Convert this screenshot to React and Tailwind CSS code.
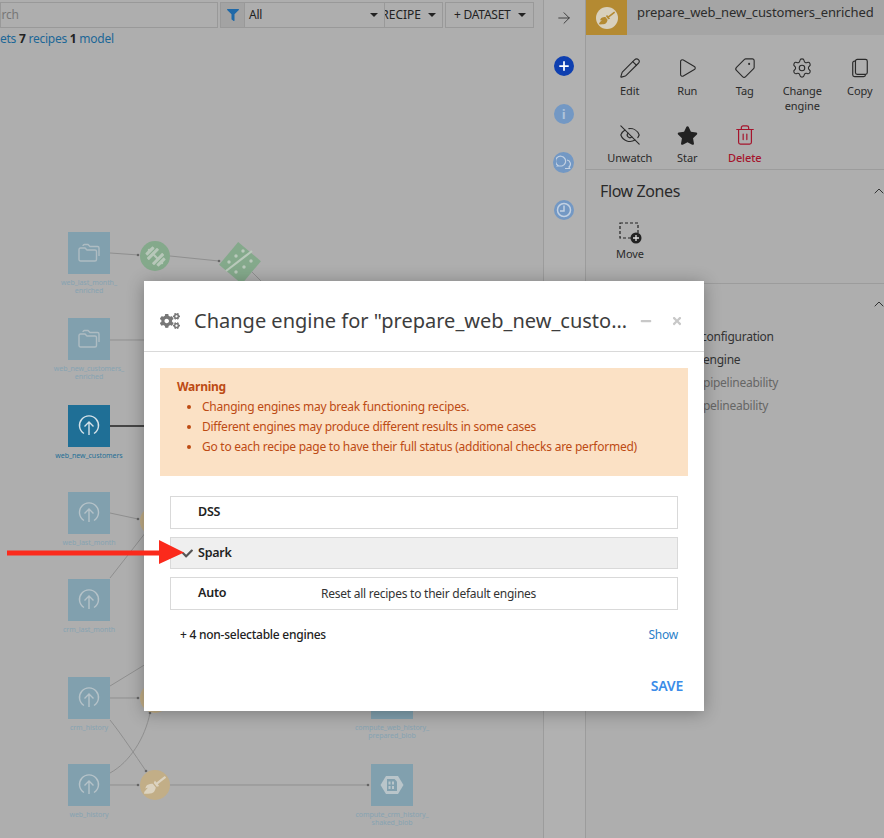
import { ArrowRight, ChevronUp, EyeOff, Pencil, Play, Plus, Settings, Tag, Trash2 } from 'lucide-react';
import { FaBroom, FaCheck, FaCogs, FaDumbbell, FaFilter, FaMinus, FaStar, FaTimes } from 'react-icons/fa';

function DatasetNode({ x, y, label, kind = 'upload', active = false }) {
  return (
    <div className="absolute w-[100px] flex flex-col items-center" style={{ left: x, top: y }}>
      <div className={`w-[42px] h-[42px] flex items-center justify-center ${active ? 'bg-[#1f6f96]' : 'bg-[#81a0ae]'}`}>
        {kind === 'folder' && <Folders />}
        {kind === 'upload' && <UploadRing color={active ? '#d5e2e9' : '#b5c2c8'} />}
        {kind === 'blob' && <BlobIcon />}
      </div>
      <div className={`mt-[5px] text-[7px] leading-[8px] tracking-[-0.05px] text-center whitespace-pre ${active ? 'text-[#1f6f96]' : 'text-[#86a3b2]'}`}>{label}</div>
    </div>
  );
}

function Folders() {
  return (
    <svg width="22" height="20" viewBox="0 0 22 20" fill="none" stroke="#aebcc2" strokeWidth="1.4">
      <path d="M1 6.500A1.500 1.500 0 0 1 2.500 5H7l2 2h8a1.500 1.500 0 0 1 1.500 1.500v8A1.500 1.500 0 0 1 17 18H2.500A1.500 1.500 0 0 1 1 16.500z" />
      <path d="M5 3A1.500 1.500 0 0 1 6.500 1.500H10l2 2h7.500A1.500 1.500 0 0 1 21 5v8" />
    </svg>
  );
}

function UploadRing({ color }) {
  return (
    <svg width="22" height="22" viewBox="0 0 22 22" fill="none" stroke={color} strokeWidth="1.4">
      <path d="M6 18.500a9.500 9.500 0 1 1 10 0" />
      <path d="M11 20V7M6.500 11.500 11 7l4.500 4.500" />
    </svg>
  );
}

function BlobIcon() {
  return (
    <svg width="24" height="20" viewBox="0 0 24 20">
      <path d="M6 1h12l5.500 9L18 19H6L.5 10z" fill="#b9c5ca" />
      <path d="M7 4h7.500L17 6.500V16H7z" fill="#81a0ae" />
      <path d="M8.500 6.500h2v3h-2zM12 6.500h2v3h-2zM8.500 11h2v3h-2zM12 11h2v3h-2z" fill="#b9c5ca" />
    </svg>
  );
}

function RecipeNode({ x, y, color, children }) {
  return (
    <div className="absolute w-[30px] h-[30px] rounded-full flex items-center justify-center" style={{ left: x, top: y, backgroundColor: color }}>
      {children}
    </div>
  );
}

function FlowCanvas() {
  const dots = [[138, 255], [219, 261], [138, 519], [138, 698], [146, 771], [150, 713], [138, 785], [368, 785]];
  return (
    <div className="absolute inset-0">
      <svg className="absolute inset-0" width="543" height="838" fill="none" stroke="#8f8f8f" strokeWidth="1">
        <path d="M110 253 139 255M170 256 219 261M252 272 266 286M110 340 160 340M110 513 138 519M110 578 146 532M110 686 146 664M110 698 138 698M110 720C122 735 135 755 146 771M110 773C130 762 145 738 150 713M110 785 138 785M170 785 368 785" />
        <path d="M110 426 160 426" stroke="#222" strokeWidth="1.4" />
        {dots.map(([cx, cy]) => (
          <circle key={`${cx}-${cy}`} cx={cx} cy={cy} r="1.300" fill="#666" stroke="none" />
        ))}
      </svg>
      <DatasetNode x={39} y={232} kind="folder" label={'web_last_month_\nenriched'} />
      <DatasetNode x={39} y={318} kind="folder" label={'web_new_customers_\nenriched'} />
      <DatasetNode x={39} y={405} active label="web_new_customers" />
      <DatasetNode x={39} y={492} label="web_last_month" />
      <DatasetNode x={39} y={579} label="crm_last_month" />
      <DatasetNode x={39} y={677} label="crm_history" />
      <DatasetNode x={39} y={764} label="web_history" />
      <DatasetNode x={342} y={677} kind="blob" label={'compute_web_history_\nprepared_blob'} />
      <DatasetNode x={342} y={764} kind="blob" label={'compute_crm_history_\nshaked_blob'} />
      <RecipeNode x={140} y={241} color="#84a98b">
        <FaDumbbell className="rotate-45 text-[#b7c7b9]" size={21} />
      </RecipeNode>
      <svg className="absolute left-[219px] top-[242px]" width="42" height="42" viewBox="0 0 42 42">
        <path d="M21 0 42 21 21 42 0 21z" transform="rotate(-5 21 21)" fill="#84a98b" />
        <path d="M7 29 33 9" stroke="#b9c9bb" strokeWidth="2.200" />
        <g fill="#b9c9bb">
          <circle cx="10" cy="20" r="1.700" /><circle cx="17" cy="14" r="1.700" /><circle cx="24" cy="9" r="1.700" />
          <circle cx="17" cy="30" r="1.700" /><circle cx="25" cy="25" r="1.700" /><circle cx="32" cy="19" r="1.700" />
        </g>
      </svg>
      <RecipeNode x={140} y={506} color="#c2ae87" />
      <RecipeNode x={140} y={683} color="#c2ae87" />
      <RecipeNode x={140} y={770} color="#c2ae87"><FaBroom className="text-[#dcd3c0]" size={22} /></RecipeNode>
    </div>
  );
}

function Caret() {
  return <span className="shrink-0 w-0 h-0 border-x-[4px] border-x-transparent border-t-[4px] border-t-[#222]" />;
}

function Toolbar() {
  return (
    <div className="relative flex h-[26px] mt-[2px] w-[534px] text-[12px] text-[#222]">
      <div className="w-[218px] border border-[#999] text-[#777] leading-[24px] overflow-hidden">
        <span className="block -ml-[6px]">arch</span>
      </div>
      <div className="ml-[2px] w-[25px] border border-[#999] bg-[#a3a3a3] flex items-center justify-center">
        <FaFilter className="text-[#1f69a8]" size={12} />
      </div>
      <div className="w-[140px] border-y border-r border-[#999] flex items-center justify-between pl-[4px] pr-[6px]">
        All<Caret />
      </div>
      <div className="w-[58px] border-y border-r border-[#999] flex items-center justify-end gap-[7px] pr-[6px] overflow-hidden tracking-normal">
        <span className="whitespace-nowrap">RECIPE</span><Caret />
      </div>
      <div className="ml-[2px] w-[89px] border border-[#999] flex items-center justify-between pl-[8px] pr-[7px] whitespace-nowrap">
        + DATASET<Caret />
      </div>
    </div>
  );
}

function Rail() {
  return (
    <div className="w-[42px] shrink-0 border-l border-[#9c9c9c] bg-[#b1b1b1] flex flex-col items-center pt-[9px] pr-[2px]">
      <ArrowRight className="w-[18px] h-[18px] text-[#333]" strokeWidth={1.2} />
      <div className="mt-[29px] w-5 h-5 rounded-full bg-[#0e3fb0] flex items-center justify-center">
        <Plus className="w-[14px] h-[14px] text-white" strokeWidth={3} />
      </div>
      <div className="mt-[28px] w-5 h-5 rounded-full bg-[#7398c4] flex items-center justify-center text-[#afc3da] text-[13px] font-bold leading-none">i</div>
      <div className="mt-[28px] w-[21px] h-[21px] rounded-full bg-[#7398c4] flex items-center justify-center">
        <svg width="15" height="15" viewBox="0 0 15 15" fill="none" stroke="#c3d1e2" strokeWidth="1.200"><path d="M2 10.500A5 5 0 1 1 6 11H1.500z" /><path d="M11 5a4 4 0 0 1 2 7l.7 1.500H9" /></svg>
      </div>
      <div className="mt-[27px] w-5 h-5 rounded-full bg-[#7398c4] flex items-center justify-center">
        <svg width="16" height="16" viewBox="0 0 16 16" fill="none" stroke="#c3d1e2" strokeWidth="1.500"><circle cx="8" cy="8" r="6.500" /><path d="M8 3.500V9H4" /></svg>
      </div>
    </div>
  );
}

function Action({ icon, label, color = 'text-[#2a2a2a]', tight = false }) {
  return (
    <div className={`flex flex-col items-center text-center text-[11px] leading-[15px] tracking-[-0.1px] ${color}`}>
      <div className="h-[24px] flex items-center justify-center">{icon}</div>
      <div className={tight ? 'mt-[1px]' : 'mt-[3px]'}>{label}</div>
    </div>
  );
}

function CopyIcon() {
  return (
    <svg width="20" height="20" viewBox="0 0 22 22" fill="none" stroke="#2a2a2a" strokeWidth="1.300">
      <rect x="6" y="1.500" width="13" height="16.500" rx="2" />
      <path d="M6 3.500H5A2 2 0 0 0 3 5.500v13A2 2 0 0 0 5 20.500h10A2 2 0 0 0 17 18.500V18" />
    </svg>
  );
}

function SidePanel() {
  const cls = 'w-[22px] h-[22px]';
  return (
    <div className="flex-1 min-w-0 border-l border-[#9c9c9c] flex flex-col overflow-hidden">
      <div className="h-[35px] bg-[#a5a5a5] flex shrink-0">
        <div className="w-[41px] bg-[#b48a32] flex items-center justify-center">
          <div className="w-[22px] h-[22px] rounded-full bg-[#d8d0bd] flex items-center justify-center"><FaBroom className="text-[#b48a32]" size={16} /></div>
        </div>
        <div className="ml-[10px] text-[13px] leading-[25px] tracking-[-0.1px] whitespace-nowrap text-[#2c2c2c]">prepare_web_new_customers_enriched</div>
      </div>
      <div className="grid grid-cols-[repeat(5,57.5px)] gap-y-[10px] pl-[15px] pt-[21px] border-b border-[#9c9c9c] h-[135px] content-start">
        <Action icon={<Pencil className={cls} strokeWidth={1.2} />} label="Edit" />
        <Action icon={<Play className={cls} strokeWidth={1.2} />} label="Run" />
        <Action icon={<Tag className={`${cls} -scale-x-100`} strokeWidth={1.2} />} label="Tag" />
        <Action icon={<Settings className={cls} strokeWidth={1.2} />} label={<>Change<br />engine</>} />
        <Action icon={<CopyIcon />} label="Copy" />
        <Action icon={<EyeOff className={cls} strokeWidth={1.2} />} label="Unwatch" />
        <Action icon={<FaStar className="text-[#222]" size={21} />} label="Star" />
        <Action icon={<Trash2 className={cls} strokeWidth={1.3} />} label={<span className="font-medium">Delete</span>} color="text-[#a5142c]" />
      </div>
      <div className="flex items-center justify-between pl-[14px] h-[42px] text-[16px] tracking-[-0.4px] text-[#2a2a2a] whitespace-nowrap">
        Flow Zones
        <ChevronUp className="w-4 h-4 mr-[-3px] text-[#333]" strokeWidth={1.5} />
      </div>
      <div className="w-[60px] ml-[14px] mt-[9px]">
        <Action
          tight
          label="Move"
          icon={
            <svg width="23" height="23" viewBox="0 0 23 23" fill="none">
              <rect x="1" y="1" width="18" height="15" stroke="#222" strokeWidth="1.200" strokeDasharray="3 2" />
              <circle cx="17" cy="16" r="5.500" fill="#222" />
              <path d="M14 16h6M17 13v6" stroke="#ddd" strokeWidth="1.300" />
            </svg>
          }
        />
      </div>
      <div className="mt-[22px] border-t border-[#9c9c9c] pt-[12px] flex justify-end">
        <ChevronUp className="w-4 h-4 mr-[-3px] text-[#333]" strokeWidth={1.5} />
      </div>
      <div className="mt-[13px] text-[12px] leading-[23px] tracking-[-0.25px] whitespace-nowrap text-[#333]">
        <div className="pl-[115px]">configuration</div>
        <div className="pl-[117px]">engine</div>
        <div className="pl-[117px] text-[#666]">pipelineability</div>
        <div className="pl-[107px] text-[#666]">pipelineability</div>
      </div>
    </div>
  );
}

function EngineRow({ name, note, selected }) {
  return (
    <div className={`relative h-[32.5px] border border-[#d9d9d9] flex items-center pl-[27px] pt-[1px] text-[12.5px] ${selected ? 'bg-[#efefef]' : 'bg-white'}`}>
      {selected && <FaCheck className="absolute left-[11px] top-[10px] text-[#555]" size={11} />}
      <span className="font-semibold text-[#222] w-[123px]">{name}</span>
      {note && <span className="text-[12px] text-[#333]">{note}</span>}
    </div>
  );
}

function Modal() {
  return (
    <div className="absolute left-[144px] top-[281px] w-[560px] h-[430px] bg-white shadow-[0_2px_16px_rgba(0,0,0,0.3)] flex flex-col">
      <div className="h-[71px] shrink-0 border-b border-[#d9d9d9] flex items-center pl-[16px] pt-[9px]">
        <FaCogs className="text-[#777]" size={20} />
        <div className="ml-[14px] w-[436px] text-[20px] tracking-normal text-[#3d3d3d] whitespace-nowrap overflow-hidden text-ellipsis">Change engine for "prepare_web_new_customers_enriched"</div>
        <FaMinus className="ml-[10px] text-[#c8c8c8]" size={12} />
        <FaTimes className="ml-[19px] text-[#c8c8c8]" size={12} />
      </div>
      <div className="mx-[16px] mt-[16px] h-[108px] bg-[#fbe1c5] pl-[17px] pt-[9px] text-[12px] leading-[20px] text-[#bd4b14]">
        <div className="font-bold">Warning</div>
        <ul className="list-disc pl-[25px]">
          <li>Changing engines may break functioning recipes.</li>
          <li>Different engines may produce different results in some cases</li>
          <li>Go to each recipe page to have their full status (additional checks are performed)</li>
        </ul>
      </div>
      <div className="mx-[26px] mt-[20px] flex flex-col gap-[8px]">
        <EngineRow name="DSS" />
        <EngineRow name="Spark" selected />
        <EngineRow name="Auto" note="Reset all recipes to their default engines" />
      </div>
      <div className="mx-[26px] mt-[16px] pl-[10px] flex justify-between text-[12px] leading-[18px] text-[#222]">
        <span className="font-medium">+ 4 non-selectable engines</span>
        <span className="text-[#2b7fc9]">Show</span>
      </div>
      <div className="mt-[31px] pr-[21px] text-right text-[14px] font-semibold text-[#3b8ce8]">SAVE</div>
    </div>
  );
}

function RedArrow() {
  return (
    <svg className="absolute left-[7px] top-[540px]" width="177" height="24" viewBox="0 0 177 24" fill="#fb2a1c">
      <path d="M0 10.500h152V0l25 12.500L152 24v-8.500H0z" />
    </svg>
  );
}

export default function App() {
  return (
    <div className="relative w-[884px] h-[838px] overflow-hidden flex bg-[#aeaeae] tracking-[-0.25px] font-['Noto_Sans','Open_Sans',sans-serif]">
      <div className="relative w-[543px] shrink-0">
        <FlowCanvas />
        <Toolbar />
        <div className="relative mt-[2px] text-[12px] leading-[18px] whitespace-nowrap text-[#1c6797]">
          ets <b className="text-[#222]">7</b> recipes <b className="text-[#222]">1</b> model
        </div>
      </div>
      <Rail />
      <SidePanel />
      <Modal />
      <RedArrow />
    </div>
  );
}
